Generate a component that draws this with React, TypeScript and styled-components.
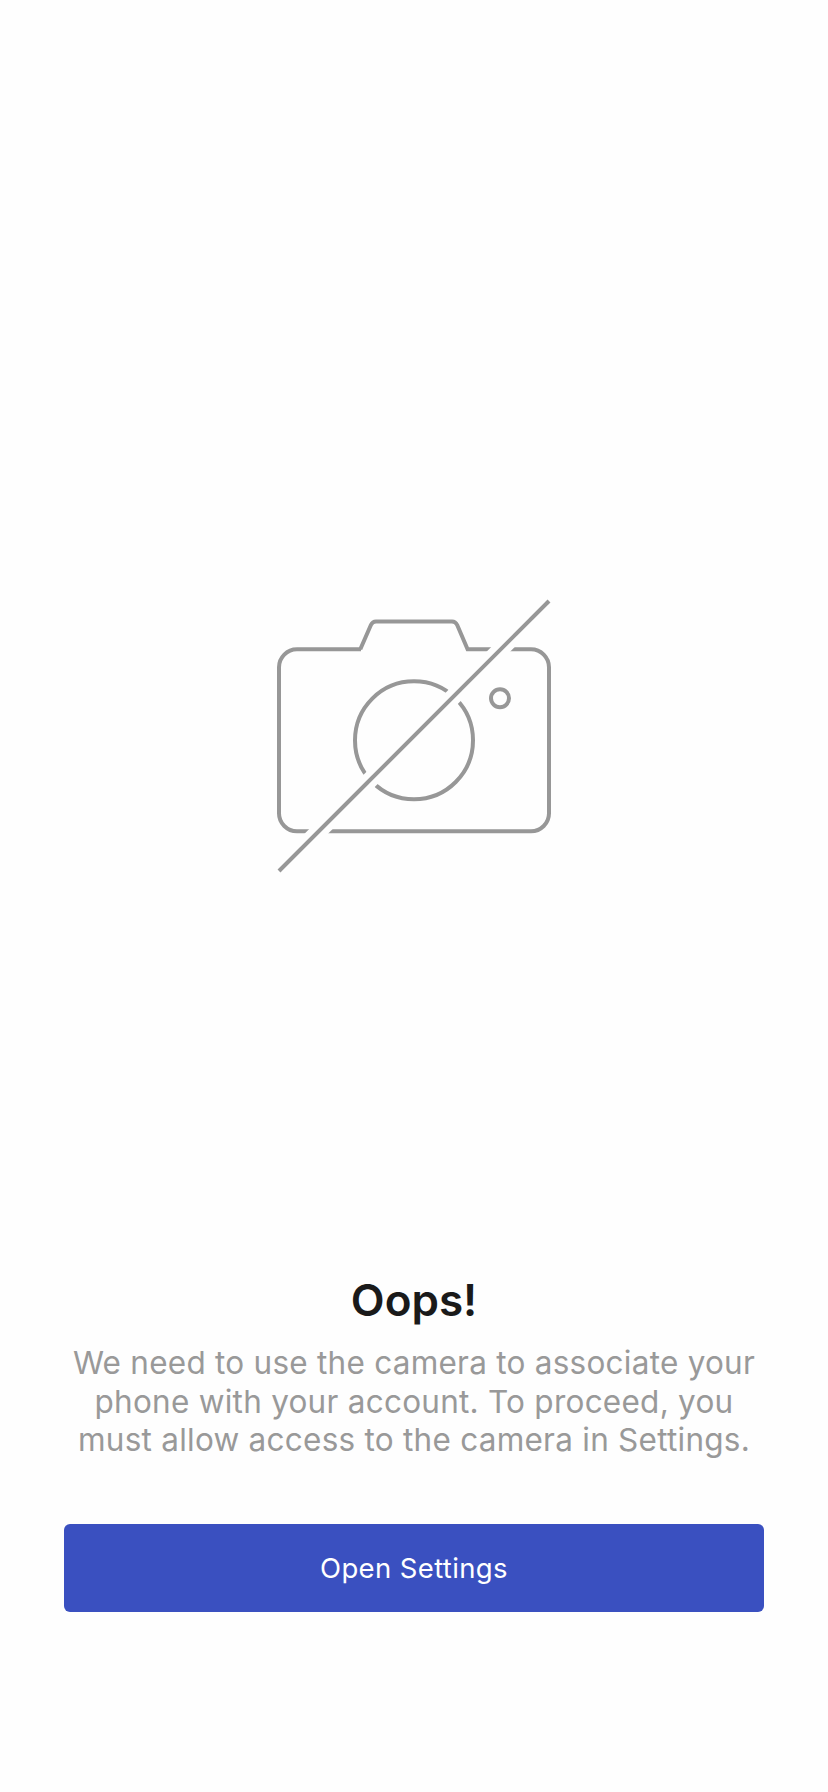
import React from "react";
import styled, { createGlobalStyle } from "styled-components";

const fontStack = 'Inter, "Liberation Sans", sans-serif';

const GlobalStyle = createGlobalStyle`
  * { box-sizing: border-box; }
  body { margin: 0; background: #fefefe; font-family: ${fontStack}; }
`;

const Screen = styled.main`
  min-height: 1792px;
  padding: 0 64px 180px;
  display: flex;
  flex-direction: column;
  align-items: center;
`;

const Illustration = styled.div`
  flex: 1;
  display: flex;
  align-items: flex-end;
  padding-bottom: 396px;
`;

const CameraSvg = styled.svg`
  display: block;
  width: 276px;
  height: 276px;
`;

const Title = styled.h1`
  margin: 0;
  color: #1a1a1a;
  font-size: 44px;
  line-height: 60px;
  font-weight: 600;
`;

const Message = styled.p`
  margin: 14px 0 0;
  color: #999;
  font-size: 31.5px;
  line-height: 38.5px;
  text-align: center;
  white-space: nowrap;
  letter-spacing: 0.25px;
`;

const ActionButton = styled.button`
  width: 100%;
  height: 88px;
  margin-top: 64.5px;
  padding: 0;
  border: 0;
  border-radius: 6px;
  background: #3a50c0;
  color: #fff;
  font: 400 27.5px/40px ${fontStack};
  letter-spacing: 0.37px;
`;

const CameraOff = () => (
  <CameraSvg viewBox="276 598 276 276" fill="none" stroke="#979797" strokeWidth="4" aria-hidden="true">
    <mask id="slash-gap" maskUnits="userSpaceOnUse" x="270" y="590" width="290" height="290">
      <rect x="270" y="590" width="290" height="290" fill="#fff" stroke="none" />
      <path d="M269 881 559 591" stroke="#000" strokeWidth="16.5" />
    </mask>
    <g mask="url(#slash-gap)">
      <path d="M361 649.3H297A18 18 0 0 0 279 667.3V813.3A18 18 0 0 0 297 831.3H531A18 18 0 0 0 549 813.3V667.3A18 18 0 0 0 531 649.3H467.6L457.2 625Q455.5 621.4 452 621.4H376Q372.5 621.4 370.9 625L360.3 649.3" />
      <circle cx="414" cy="740.3" r="59" />
      <circle cx="500" cy="698.3" r="9" />
    </g>
    <path d="M279 871 549 601" />
  </CameraSvg>
);

export default function App() {
  return (
    <>
      <GlobalStyle />
      <Screen>
        <Illustration>
          <CameraOff />
        </Illustration>
        <Title>Oops!</Title>
        <Message>
          We need to use the camera to associate your
          <br />
          phone with your account. To proceed, you
          <br />
          must allow access to the camera in Settings.
        </Message>
        <ActionButton type="button">Open Settings</ActionButton>
      </Screen>
    </>
  );
}
